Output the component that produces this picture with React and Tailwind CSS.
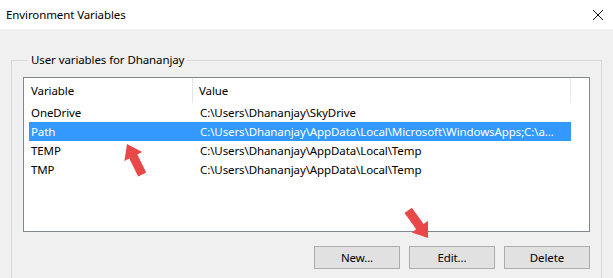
import React from 'react';

const rows = [
  { name: 'OneDrive', value: 'C:\\Users\\Dhananjay\\SkyDrive' },
  { name: 'Path', value: 'C:\\Users\\Dhananjay\\AppData\\Local\\Microsoft\\WindowsApps;C:\\a...', selected: true },
  { name: 'TEMP', value: 'C:\\Users\\Dhananjay\\AppData\\Local\\Temp' },
  { name: 'TMP', value: 'C:\\Users\\Dhananjay\\AppData\\Local\\Temp' },
];

const font = { fontFamily: '"Segoe UI", "Noto Sans", "Open Sans", sans-serif' };

export default function App() {
  return (
    <div className="relative w-[613px] h-[278px] overflow-hidden bg-[#f0f0f0] text-[11.5px] tracking-[-0.1px] text-black" style={font}>
      {/* Title bar */}
      <div className="h-[29px] bg-white flex items-center justify-between pl-[6px] pr-[8px]">
        <span className="leading-none">Environment Variables</span>
        <svg width="12" height="12" viewBox="0 0 12 12" className="mr-[1px]">
          <path d="M1 1 L11 11 M11 1 L1 11" stroke="#111" strokeWidth="1" />
        </svg>
      </div>

      {/* Group box */}
      <fieldset className="ml-[11px] mt-[23px] w-[591px] h-[240px] border border-[#d9d9d9] pl-[11px] pr-[11px]">
        <legend className="ml-[5px] px-[3px] leading-[16px]">User variables for Dhananjay</legend>

        <div className="mt-[9px] w-[567px] h-[155px] border border-[#828790] bg-white">
          {/* Header */}
          <div className="flex h-[25px] items-center">
            <div className="w-[169px] shrink-0 h-full pl-[7px] flex items-center border-r border-[#e5e5e5]">Variable</div>
            <div className="w-[378px] shrink-0 h-full pl-[6px] flex items-center border-r border-[#eaeaea]">Value</div>
          </div>
          <div className="pl-[5px]">
            {rows.map((r) => (
              <div
                key={r.name}
                className={`flex h-[19px] w-[542px] items-center whitespace-nowrap overflow-hidden ${r.selected ? 'bg-[#3399ff] text-white' : ''}`}
              >
                <div className="w-[164px] shrink-0 pl-[2px]">{r.name}</div>
                <div className="pl-[7px]">{r.value}</div>
              </div>
            ))}
          </div>
        </div>

        <div className="mt-[14px] w-[567px] flex justify-end gap-[9px]">
          {['New...', 'Edit...', 'Delete'].map((b) => (
            <button
              key={b}
              className="w-[86px] h-[23px] bg-[#e1e1e1] border border-[#adadad] leading-none"
              style={font}
            >
              {b}
            </button>
          ))}
        </div>
      </fieldset>

      {/* Red annotation arrows */}
      <svg className="absolute left-0 top-0 pointer-events-none" width="613" height="278">
        <polygon
          points="127,144 142.2,152 137.3,154.5 146.2,172.4 138.2,176.4 129.3,158.5 124.4,161"
          fill="#e84848"
        />
        <polygon
          points="428,238 428,220.8 423.6,224 411.9,207.7 404.5,212.9 416.2,229.2 411.8,232.4"
          fill="#e84848"
        />
      </svg>
    </div>
  );
}
